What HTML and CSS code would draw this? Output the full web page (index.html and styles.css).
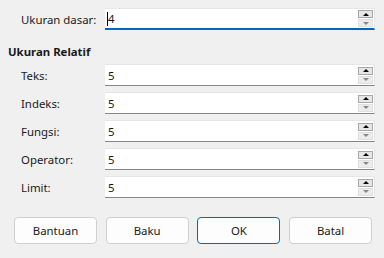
FILE: index.html
```html
<!DOCTYPE html>
<html>
<head>
    <meta charset="UTF-8">
    <link rel="stylesheet" href="styles.css">
</head>
<body>
    <div class="dialog">
        <div class="row row-top">
            <label>Ukuran dasar:</label>
            <div class="spin focused">
                <div class="value"><span class="caret"></span>4</div>
                <div class="arrows">
                    <div class="arrow up"></div>
                    <div class="arrow down"></div>
                </div>
            </div>
        </div>

        <div class="heading">Ukuran Relatif</div>

        <div class="rows">
            <div class="row">
                <label>Teks:</label>
                <div class="spin">
                    <div class="value">5</div>
                    <div class="arrows"><div class="arrow up"></div><div class="arrow down"></div></div>
                </div>
            </div>
            <div class="row">
                <label>Indeks:</label>
                <div class="spin">
                    <div class="value">5</div>
                    <div class="arrows"><div class="arrow up"></div><div class="arrow down"></div></div>
                </div>
            </div>
            <div class="row">
                <label>Fungsi:</label>
                <div class="spin">
                    <div class="value">5</div>
                    <div class="arrows"><div class="arrow up"></div><div class="arrow down"></div></div>
                </div>
            </div>
            <div class="row">
                <label>Operator:</label>
                <div class="spin">
                    <div class="value">5</div>
                    <div class="arrows"><div class="arrow up"></div><div class="arrow down"></div></div>
                </div>
            </div>
            <div class="row">
                <label>Limit:</label>
                <div class="spin">
                    <div class="value">5</div>
                    <div class="arrows"><div class="arrow up"></div><div class="arrow down"></div></div>
                </div>
            </div>
        </div>

        <div class="buttons">
            <button>Bantuan</button>
            <button>Baku</button>
            <button class="default">OK</button>
            <button>Batal</button>
        </div>
    </div>
</body>
</html>
```

FILE: styles.css
```css
body {
    margin: 0;
    background: #f0f0f0;
    font-family: "Noto Sans", "Open Sans", sans-serif;
    font-size: 11.4px;
    color: #1a1a1a;
}
.dialog {
    width: 384px;
    height: 258px;
    box-sizing: border-box;
    padding-top: 8px;
}
.row {
    display: flex;
    align-items: center;
    height: 22px;
    padding-left: 21px;
}
.row label {
    width: 84px;
}
.spin {
    width: 270px;
    height: 22px;
    box-sizing: border-box;
    background: #fff;
    border-top: 1px solid #e6e6e6;
    border-right: 1px solid #e6e6e6;
    border-bottom: 1px solid #868686;
    display: flex;
    align-items: center;
}
.spin.focused {
    border-bottom: 2px solid #0067c0;
}
.value {
    flex: 1;
    padding-left: 3px;
    display: flex;
    align-items: center;
}
.caret {
    display: inline-block;
    width: 1px;
    height: 14px;
    background: #000;
    margin-left: -1px;
}
.arrows {
    display: flex;
    flex-direction: column;
    gap: 1px;
    margin-right: 1px;
}
.arrow {
    width: 15px;
    height: 8px;
    box-sizing: border-box;
    display: flex;
    align-items: center;
    justify-content: center;
}
.arrow.up {
    background: #e6e6e6;
    border: 1px solid #a8a8a8;
}
.arrow.down {
    background: #ececec;
    border: 1px solid #e0e0e0;
}
.arrow::after {
    content: "";
    width: 0;
    height: 0;
    border-left: 3px solid transparent;
    border-right: 3px solid transparent;
}
.arrow.up::after {
    border-bottom: 3px solid #000;
}
.arrow.down::after {
    border-top: 3px solid #888;
}
.heading {
    font-weight: bold;
    padding-left: 8px;
    margin-top: 15px;
    height: 19px;
    line-height: 14px;
}
.rows {
    display: flex;
    flex-direction: column;
    gap: 6px;
}
.buttons {
    display: grid;
    grid-template-columns: repeat(4, 83px);
    column-gap: 8.7px;
    padding-left: 14px;
    margin-top: 19px;
}
button {
    height: 27px;
    background: #fdfdfd;
    border: 1px solid #d0d0d0;
    border-radius: 4px;
    font-family: inherit;
    font-size: 11.4px;
    color: #1a1a1a;
    padding: 0;
}
button.default {
    border-color: #0067c0;
}
```
